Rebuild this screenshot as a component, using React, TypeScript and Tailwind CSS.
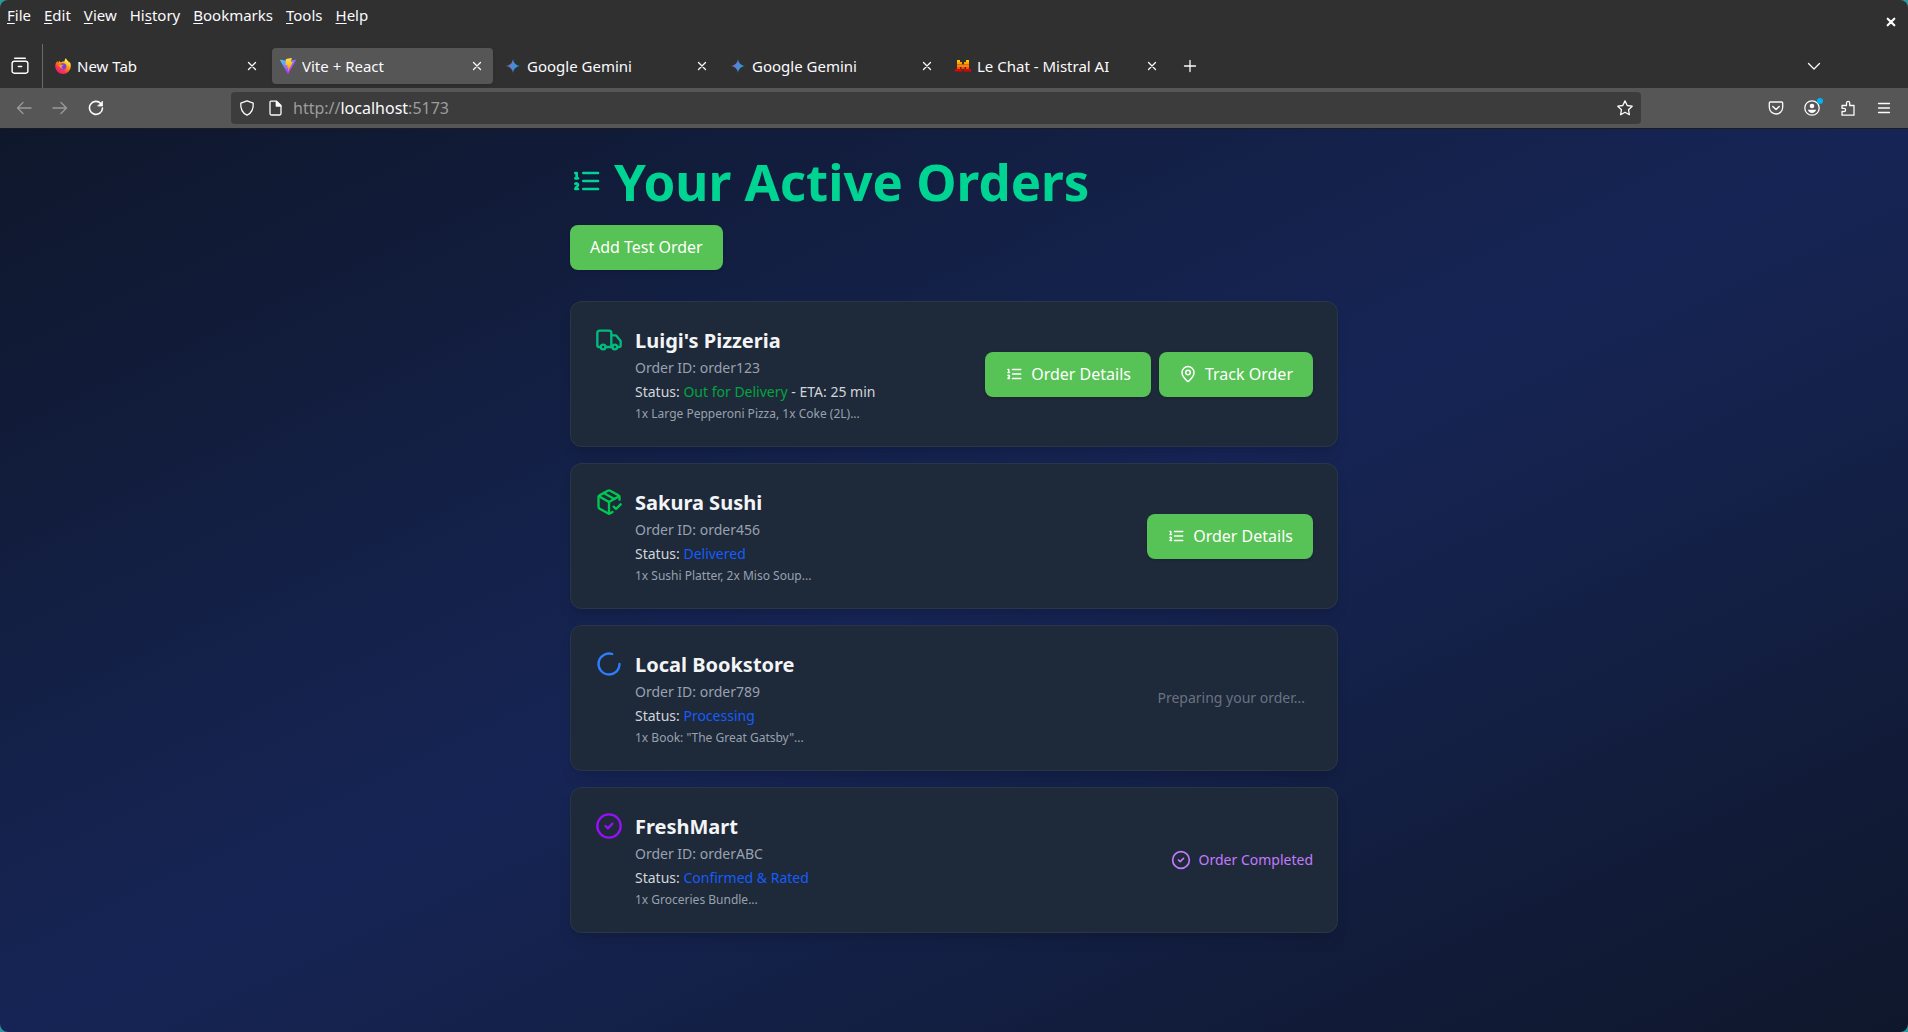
import { type ReactNode } from "react";
import { CircleCheck, LoaderCircle, MapPin, PackageCheck, Truck } from "lucide-react";

const menus: [string, string, string][] = [
  ["", "F", "ile"],
  ["", "E", "dit"],
  ["", "V", "iew"],
  ["Hi", "s", "tory"],
  ["", "B", "ookmarks"],
  ["", "T", "ools"],
  ["", "H", "elp"],
];

function ListIcon({ className }: { className: string }) {
  return (
    <svg viewBox="0 0 24 24" fill="none" stroke="currentColor" strokeWidth="2" strokeLinecap="round" strokeLinejoin="round" className={className} aria-hidden="true">
      <path d="M10 12h11M10 18h11M10 6h11M4 10h2M4 6h1v4M6 18H4c0-1 2-2 2-3s-1-1.5-2-1" />
    </svg>
  );
}

function FirefoxLogo() {
  return (
    <svg viewBox="0 0 16 16" className="size-4 shrink-0" aria-hidden="true">
      <defs>
        <linearGradient id="fox" x1="0.85" y1="0.05" x2="0.2" y2="1">
          <stop offset="0.1" stopColor="#fff44f" />
          <stop offset="0.4" stopColor="#ff980e" />
          <stop offset="0.7" stopColor="#ff3647" />
          <stop offset="1" stopColor="#e31587" />
        </linearGradient>
      </defs>
      <path d="M15.4 5.3C15 4.500 14.300 3.700 13.700 3.400c.4.800.6 1.500.6 1.900C13.400 3.100 12 2.200 10.700.3c-.4.500-1 1.600-1.200 2.900C8 3.300 7 3.700 6.200 4.300 5.300 4.200 4.600 3.700 4.300 2.800 3.700 3.400 3.400 4 3.300 4.600c-.5 0-.8-.7-.8-1.700C1.100 4.100.2 6.100.2 8.300A7.700 7.700 0 0 0 8 16a7.800 7.800 0 0 0 7.800-7.700c0-1.100-.1-2.200-.4-3Z" fill="url(#fox)" />
      <circle cx="8" cy="8.500" r="3.300" fill="#7542e5" />
      <path d="M3.600 7.300c1-.9 2.400-1 3.300-.5l1.500.2c0 .8-1.300 1-1.700 1.400-.3.800.4 1.700 1.600 1.500-1.600 1.300-3.600.2-4.700-2.600Z" fill="#ff9a1f" />
    </svg>
  );
}

function ViteLogo() {
  return (
    <svg viewBox="0 0 256 257" className="size-4 shrink-0" aria-hidden="true">
      <defs>
        <linearGradient id="viteA" x1="-0.8%" x2="57.600%" y1="7.700%" y2="78.400%">
          <stop offset="0%" stopColor="#41D1FF" />
          <stop offset="100%" stopColor="#BD34FE" />
        </linearGradient>
        <linearGradient id="viteB" x1="43.400%" x2="50.300%" y1="2.200%" y2="89%">
          <stop offset="0%" stopColor="#FFEA83" />
          <stop offset="8.300%" stopColor="#FFDD35" />
          <stop offset="100%" stopColor="#FFA800" />
        </linearGradient>
      </defs>
      <path fill="url(#viteA)" d="M255.153 37.938L134.897 252.976c-2.483 4.440-8.862 4.466-11.382.048L.875 37.958c-2.746-4.814 1.371-10.646 6.827-9.670l120.385 21.517a6.537 6.537 0 0 0 2.322-.004l117.867-21.483c5.438-.991 9.574 4.796 6.877 9.620Z" />
      <path fill="url(#viteB)" d="M185.432.063L96.440 17.501a3.268 3.268 0 0 0-2.634 3.014l-5.474 92.456a3.268 3.268 0 0 0 3.997 3.378l24.777-5.718c2.318-.535 4.413 1.507 3.936 3.838l-7.361 36.047c-.495 2.426 1.782 4.500 4.151 3.780l15.304-4.649c2.372-.720 4.652 1.360 4.150 3.788l-11.698 56.621c-.732 3.542 3.979 5.473 5.943 2.437l1.313-2.028 72.516-144.720c1.215-2.423-.880-5.186-3.540-4.672l-25.505 4.922c-2.396.462-4.435-1.770-3.759-4.114l16.646-57.705c.677-2.350-1.370-4.583-3.769-4.113Z" />
    </svg>
  );
}

function GeminiLogo() {
  return (
    <svg viewBox="0 0 16 16" className="size-4 shrink-0" aria-hidden="true">
      <defs>
        <linearGradient id="gem" x1="0" y1="0.3" x2="1" y2="0.600">
          <stop offset="0.100" stopColor="#9168c0" />
          <stop offset="0.450" stopColor="#5684d1" />
          <stop offset="0.900" stopColor="#1ba1e3" />
        </linearGradient>
      </defs>
      <path d="M8 1C8.500 5 11 7.500 15 8 11 8.500 8.500 11 8 15 7.500 11 5 8.500 1 8 5 7.500 7.500 5 8 1Z" fill="url(#gem)" />
    </svg>
  );
}

function MistralLogo() {
  return (
    <svg viewBox="0 0 16 16" className="size-4 shrink-0" aria-hidden="true">
      <path d="M2 2h3v2H2zM11 2h3v2h-3z" fill="#ffc800" />
      <path d="M2 4h5v2.500H2zM9 4h5v2.500H9z" fill="#ffa300" />
      <path d="M2 6.500h12V9H2z" fill="#ff8205" />
      <path d="M2 9h3v2H2zM6.500 9h3v2h-3zM11 9h3v2h-3z" fill="#fa500f" />
      <path d="M0 11h7.300v2.500H0zM8.700 11H16v2.500H8.700z" fill="#e10500" />
    </svg>
  );
}

const tabs: { title: string; logo: ReactNode; active?: boolean }[] = [
  { title: "New Tab", logo: <FirefoxLogo /> },
  { title: "Vite + React", logo: <ViteLogo />, active: true },
  { title: "Google Gemini", logo: <GeminiLogo /> },
  { title: "Google Gemini", logo: <GeminiLogo /> },
  { title: "Le Chat - Mistral AI", logo: <MistralLogo /> },
];

function Glyph({ children, className = "size-4", width = 1.3 }: { children: ReactNode; className?: string; width?: number }) {
  return (
    <svg viewBox="0 0 16 16" fill="none" stroke="currentColor" strokeWidth={width} strokeLinecap="round" strokeLinejoin="round" className={className} aria-hidden="true">
      {children}
    </svg>
  );
}

function ToolButton({ label, children, className = "" }: { label: string; children: ReactNode; className?: string }) {
  return (
    <button type="button" aria-label={label} className={`relative flex size-9 items-center justify-center ${className}`}>
      {children}
    </button>
  );
}

function BrowserChrome() {
  return (
    <header className="border-b border-[#1c1b22] bg-[#303030] text-[#fbfbfe]">
      <div className="flex h-11 items-start justify-between">
        <nav aria-label="Menu bar" className="flex gap-[13px] pt-1 pl-[7px]">
          {menus.map(([pre, key, post]) => (
            <button key={pre + key + post} type="button" className="text-[15px] leading-[22px]">
              {pre}
              <span className="underline underline-offset-2">{key}</span>
              {post}
            </button>
          ))}
        </nav>
        <button type="button" aria-label="Close window" className="mt-3 mr-[7px] flex size-5 items-center justify-center">
          <Glyph width={2.200}>
            <path d="M4.700 4.700l6.600 6.600M11.300 4.700l-6.600 6.600" />
          </Glyph>
        </button>
      </div>
      <div className="flex h-11 items-center">
        <div className="mr-1 flex h-full w-[43px] shrink-0 items-center justify-center border-r border-[#6a6a6a] pr-0.5">
          <ToolButton label="Recent browsing">
            <Glyph className="size-[18px]" width={1.300}>
              <path d="M3.300 1.200h9.400M2.800 3.800h10.400a1.800 1.800 0 0 1 1.800 1.800v7a1.800 1.800 0 0 1-1.800 1.800H2.800A1.800 1.800 0 0 1 1 12.600v-7a1.800 1.800 0 0 1 1.800-1.800ZM6.500 8.500h3" />
            </Glyph>
          </ToolButton>
        </div>
        {tabs.map((tab, i) => (
          <div
            key={i}
            className={`mr-1 flex h-9 w-[221px] items-center rounded px-2 ${tab.active ? "bg-[#565656] shadow-sm" : ""}`}
          >
            <button type="button" className="flex min-w-0 flex-1 items-center gap-1.5 text-left text-[15px] leading-[22px]">
              {tab.logo}
              <span className="truncate">{tab.title}</span>
            </button>
            <button type="button" aria-label={`Close ${tab.title}`} className="flex size-4 items-center justify-center">
              <Glyph>
                <path d="M4.500 4.500l7 7M11.500 4.500l-7 7" />
              </Glyph>
            </button>
          </div>
        ))}
        <ToolButton label="New tab">
          <Glyph>
            <path d="M8 2.500v11M2.500 8h11" />
          </Glyph>
        </ToolButton>
        <ToolButton label="List all tabs" className="mr-[76px] ml-auto">
          <Glyph>
            <path d="M2.500 5.500L8 11l5.500-5.500" />
          </Glyph>
        </ToolButton>
      </div>
      <div className="flex h-10 items-center bg-[#565656] px-1.5">
        <div className="flex">
          <ToolButton label="Back" className="text-[#9a9a9a]">
            <Glyph>
              <path d="M15 8H1.500M7 2.500L1.500 8 7 13.500" />
            </Glyph>
          </ToolButton>
          <ToolButton label="Forward" className="text-[#9a9a9a]">
            <Glyph>
              <path d="M1 8h13.500M9 2.500L14.500 8 9 13.500" />
            </Glyph>
          </ToolButton>
          <ToolButton label="Reload">
            <Glyph width={1.600}>
              <path d="M12.800 3.500A6.500 6.500 0 1 0 14.500 8" />
              <path d="M14.500 1.500V6H10z" fill="currentColor" strokeWidth="0.800" />
            </Glyph>
          </ToolButton>
        </div>
        <div className="mx-[117px] flex h-8 flex-1 items-center rounded bg-[#3c3c3c] px-2">
          <Glyph className="mr-3 size-4">
            <path d="M8 .8l6.200 2.400c.4 5-1.700 9.800-6.200 12C3.500 13 1.400 8.200 1.800 3.200Z" />
          </Glyph>
          <Glyph className="mr-2.5 size-4">
            <path d="M4 1.200h5.500L14 5.500v8a1.500 1.500 0 0 1-1.500 1.500h-8A1.500 1.500 0 0 1 3 13.500V2.200a1 1 0 0 1 1-1Z" />
            <path d="M9.300 1.500V6h4.500z" fill="currentColor" />
          </Glyph>
          <a href="#orders" aria-label="Address" className="flex-1 text-base leading-6 text-[#9d9d9d]">
            http://<span className="text-[#fbfbfe]">localhost</span>:5173
          </a>
          <Glyph>
            <path d="M8 .9l2.200 4.600 5 .7-3.700 3.500.9 5L8 12.300l-4.400 2.400.9-5L.8 6.200l5-.7Z" />
          </Glyph>
        </div>
        <div className="flex">
          <ToolButton label="Save to Pocket">
            <Glyph>
              <path d="M2.300 2h11.400c.6 0 1 .4 1 1v4.300a6.700 6.700 0 0 1-13.400 0V3c0-.6.400-1 1-1Z" />
              <path d="M4.800 6.500L8 9.500l3.200-3" strokeWidth="1.500" />
            </Glyph>
          </ToolButton>
          <ToolButton label="Account">
            <Glyph>
              <circle cx="8" cy="8" r="7.200" />
              <circle cx="8" cy="6" r="2.300" fill="currentColor" stroke="none" />
              <path d="M3.800 9.800h8.400c-.5 2-2.200 3.200-4.200 3.200s-3.700-1.200-4.200-3.200Z" fill="currentColor" stroke="none" />
            </Glyph>
            <span className="absolute top-2 right-[7px] size-1.5 rounded-full bg-[#00b3f4]" />
          </ToolButton>
          <ToolButton label="Extensions">
            <Glyph>
              <path d="M2 15.200v-3.700h2a1.600 1.600 0 0 0 0-3.200H2V5.500h4.500V3a1.600 1.600 0 0 1 3.200 0v2.500H14v9.700Z" />
            </Glyph>
          </ToolButton>
          <ToolButton label="Open application menu">
            <Glyph>
              <path d="M2.500 3.500h11M2.500 8h11M2.500 12.500h11" />
            </Glyph>
          </ToolButton>
        </div>
      </div>
    </header>
  );
}

function GreenButton({ children }: { children: ReactNode }) {
  return (
    <button type="button" className="flex items-center gap-2 rounded-lg bg-[#57c255] px-5 py-[10px] text-base leading-[25px] text-white shadow-sm">
      {children}
    </button>
  );
}

const details = (
  <GreenButton>
    <ListIcon className="size-[18px]" />
    Order Details
  </GreenButton>
);

const orders: { shop: string; id: string; status: string; tone: string; eta?: string; items: string; icon: ReactNode; actions: ReactNode }[] = [
  {
    shop: "Luigi's Pizzeria",
    id: "order123",
    status: "Out for Delivery",
    tone: "text-green-600",
    eta: " - ETA: 25 min",
    items: "1x Large Pepperoni Pizza, 1x Coke (2L)...",
    icon: <Truck className="size-7 text-emerald-500" />,
    actions: (
      <>
        {details}
        <GreenButton>
          <MapPin className="size-[18px]" />
          Track Order
        </GreenButton>
      </>
    ),
  },
  {
    shop: "Sakura Sushi",
    id: "order456",
    status: "Delivered",
    tone: "text-blue-600",
    items: "1x Sushi Platter, 2x Miso Soup...",
    icon: <PackageCheck className="size-7 text-green-500" />,
    actions: details,
  },
  {
    shop: "Local Bookstore",
    id: "order789",
    status: "Processing",
    tone: "text-blue-600",
    items: '1x Book: "The Great Gatsby"...',
    icon: <LoaderCircle className="size-7 text-blue-500" />,
    actions: <p className="px-2 text-sm text-gray-500">Preparing your order...</p>,
  },
  {
    shop: "FreshMart",
    id: "orderABC",
    status: "Confirmed & Rated",
    tone: "text-blue-600",
    items: "1x Groceries Bundle...",
    icon: <CircleCheck className="size-7 text-purple-600" />,
    actions: (
      <p className="flex items-center gap-2 text-sm text-purple-400">
        <CircleCheck className="size-5" />
        Order Completed
      </p>
    ),
  },
];

export default function App() {
  return (
    <div className="min-h-screen bg-[#2b9aa0] font-['Noto_Sans',sans-serif]">
      <div className="flex min-h-screen flex-col overflow-hidden rounded-lg">
        <BrowserChrome />
        <main id="orders" className="flex-1 bg-gradient-to-br from-slate-900 via-blue-950 to-slate-900 px-6 pt-6">
          <div className="mx-auto max-w-3xl">
            <h1 className="flex items-center text-[51px] leading-[56px] font-bold text-emerald-400">
              <ListIcon className="mr-3 size-8" />
              Your Active Orders
            </h1>
            <div className="mt-4 mb-[31px] flex">
              <GreenButton>Add Test Order</GreenButton>
            </div>
            <ul className="flex flex-col gap-4">
              {orders.map((o) => (
                <li key={o.id} className="flex items-center justify-between rounded-xl border border-gray-700/50 bg-gray-800 p-6 shadow-lg">
                  <div className="flex items-start gap-3">
                    {o.icon}
                    <div>
                      <h2 className="text-xl leading-[30px] font-bold text-gray-100">{o.shop}</h2>
                      <p className="mt-0.5 text-sm text-gray-400">Order ID: {o.id}</p>
                      <p className="mt-1 text-sm text-gray-300">
                        Status: <span className={o.tone}>{o.status}</span>
                        {o.eta}
                      </p>
                      <p className="mt-1 text-xs text-gray-400">{o.items}</p>
                    </div>
                  </div>
                  <div className="flex items-center gap-2">{o.actions}</div>
                </li>
              ))}
            </ul>
          </div>
        </main>
      </div>
    </div>
  );
}
